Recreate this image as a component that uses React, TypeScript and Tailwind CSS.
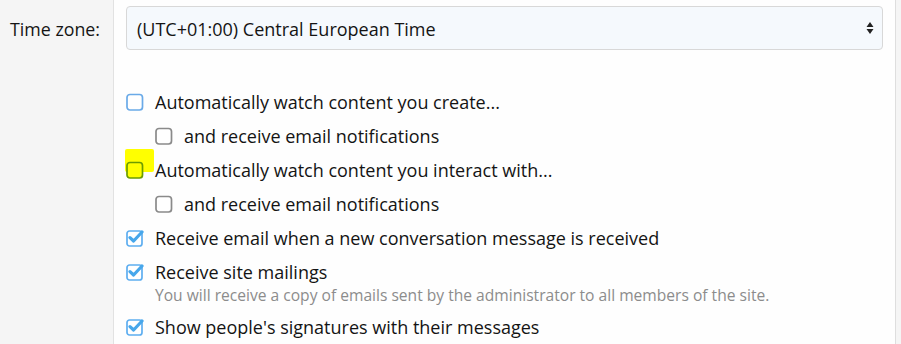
import React from "react";

const font = { fontFamily: '"Open Sans", "Noto Sans", sans-serif' };

function Box({ state }: { state: "focus" | "plain" | "checked" | "hl" }) {
  if (state === "checked") {
    return (
      <svg width="18" height="18" viewBox="0 0 18 18" className="shrink-0">
        <rect x="1" y="2" width="15" height="15" rx="2.5" fill="#fff" stroke="#5eaef0" strokeWidth="1.7" />
        <path d="M4 8.6 L7.6 12 L16 3" fill="none" stroke="#47a7eb" strokeWidth="3.2" strokeLinecap="round" strokeLinejoin="round" />
      </svg>
    );
  }
  const stroke = state === "focus" ? "#6aaae8" : state === "hl" ? "#6b9c00" : "#8a8a8a";
  const fill = state === "hl" ? "#ffff00" : "#fff";
  return (
    <svg width="18" height="18" viewBox="0 0 18 18" className="shrink-0">
      <rect x="1" y="1.5" width="15.5" height="15.5" rx="3" fill={fill} stroke={stroke} strokeWidth="1.7" />
    </svg>
  );
}

function Row({ state, text, indent = false, highlight = false }: { state: "focus" | "plain" | "checked" | "hl"; text: string; indent?: boolean; highlight?: boolean }) {
  return (
    <div className={`flex items-center h-[34px] ${indent ? "pl-[29px]" : ""}`}>
      <div className="relative flex items-center w-[29px]">
        {highlight && <div className="absolute left-[-1px] top-[-12px] w-[29px] h-[23px] bg-[#ffff00] rounded-[2px]" />}
        <div className="relative"><Box state={state} /></div>
      </div>
      <span className="text-[18px] text-[#141414] whitespace-nowrap">{text}</span>
    </div>
  );
}

export default function App() {
  return (
    <div className="flex w-[901px] h-[344px] bg-[#f5f5f5] overflow-hidden" style={font}>
      <div className="w-[114px] shrink-0 border-r border-[#e2e2e2] flex justify-end pr-[13px] pt-[17px]">
        <span className="text-[17.8px] text-[#141414] leading-[24px]">Time zone:</span>
      </div>
      <div className="w-[782px] shrink-0 bg-[#fefefe] border-r border-[#dedede] pl-[12px] pr-[12px] pt-[6px]">
        <div className="h-[44px] rounded-[4px] border border-[#d8d8d8] bg-[#f5f9fd] flex items-center justify-between pl-[10px] pr-[8px]">
          <span className="text-[18px] text-[#141414] pt-[2px]">(UTC+01:00) Central European Time</span>
          <svg width="8" height="14" viewBox="0 0 8 14">
            <path d="M4 1 L7.5 6 H0.5 Z M4 13 L7.5 8 H0.5 Z" fill="#222" />
          </svg>
        </div>
        <div className="mt-[35px] flex flex-col">
          <Row state="focus" text="Automatically watch content you create..." />
          <Row state="plain" indent text="and receive email notifications" />
          <Row state="hl" highlight text="Automatically watch content you interact with..." />
          <Row state="plain" indent text="and receive email notifications" />
          <Row state="checked" text="Receive email when a new conversation message is received" />
          <div className="flex flex-col">
            <Row state="checked" text="Receive site mailings" />
            <div className="pl-[29px] -mt-[5px] text-[15.6px] text-[#8c8c8c] leading-[22px] whitespace-nowrap">You will receive a copy of emails sent by the administrator to all members of the site.</div>
          </div>
          <div className="mt-[4px]">
            <Row state="checked" text="Show people's signatures with their messages" />
          </div>
        </div>
      </div>
    </div>
  );
}
